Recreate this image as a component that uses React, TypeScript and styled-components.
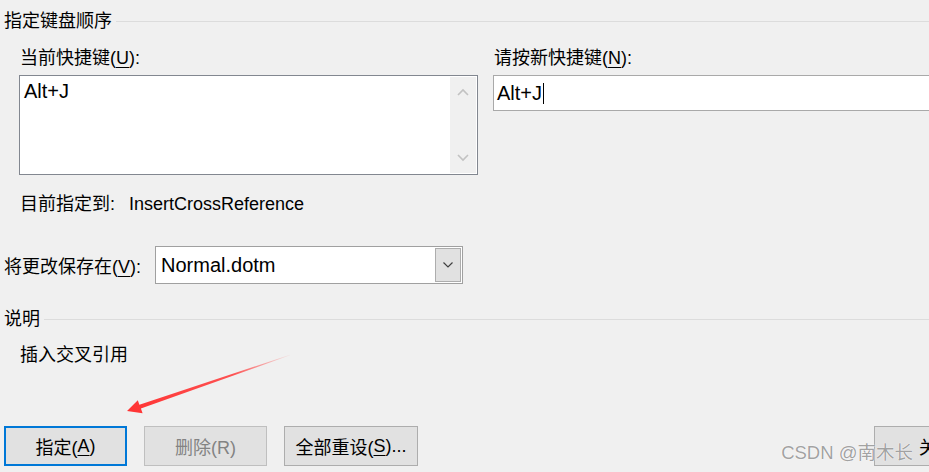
import React from "react";
import styled, { createGlobalStyle } from "styled-components";

const GlobalStyle = createGlobalStyle`
  html, body {
    margin: 0;
    padding: 0;
    background: #f0f0f0;
    overflow: hidden;
  }
  * {
    box-sizing: border-box;
  }
`;

const Dialog = styled.div`
  position: relative;
  width: 929px;
  height: 472px;
  overflow: hidden;
  background: #f0f0f0;
  padding-left: 4px;
  display: flex;
  flex-direction: column;
  color: #000;
  font-family: "Liberation Sans", "Noto Sans CJK SC", sans-serif;
  font-size: 18px;
`;

const GroupHeader = styled.div<{ $top: number }>`
  display: flex;
  align-items: center;
  height: 24px;
  margin-top: ${(p) => p.$top}px;
  gap: 4px;
`;

const GroupTitle = styled.span`
  line-height: 24px;
  white-space: nowrap;
`;

const GroupLine = styled.div`
  flex: 1;
  height: 1px;
  background: #dcdcdc;
`;

const KeyRow = styled.div`
  display: flex;
  gap: 15px;
  margin-top: 13px;
  padding-left: 15px;
`;

const Field = styled.div<{ $width: number }>`
  display: flex;
  flex-direction: column;
  gap: 5px;
  width: ${(p) => p.$width}px;
  flex-shrink: 0;
`;

const Label = styled.label`
  line-height: 24px;
  padding-left: 1px;
  white-space: nowrap;
`;

const Key = styled.u`
  text-decoration-thickness: 1px;
  text-underline-offset: 3px;
`;

const ListBox = styled.div`
  display: flex;
  height: 100px;
  background: #fff;
  border: 1px solid #828790;
`;

const ListText = styled.div`
  flex: 1;
  padding: 2px 4px;
  font-size: 20px;
  line-height: 26px;
`;

const ScrollTrack = styled.div`
  width: 26px;
  margin: 1px;
  background: #f0f0f0;
  display: flex;
  flex-direction: column;
  justify-content: space-between;
  align-items: center;
  padding: 11px 0;
`;

const TextInput = styled.div`
  display: flex;
  align-items: center;
  height: 36px;
  background: #fff;
  border: 1px solid #a9a9a9;
  padding-left: 3px;
  font-size: 20px;
`;

const Caret = styled.span`
  display: inline-block;
  width: 1px;
  height: 21px;
  margin-left: 1px;
  background: #000;
`;

const InfoRow = styled.div`
  display: flex;
  gap: 14px;
  margin-top: 17px;
  padding-left: 16px;
  line-height: 24px;
`;

const SaveRow = styled.div`
  display: flex;
  align-items: center;
  margin-top: 30px;
`;

const SaveLabel = styled.label`
  width: 151px;
  white-space: nowrap;
`;

const Select = styled.div`
  display: flex;
  width: 308px;
  height: 38px;
  background: #fff;
  border: 1px solid #a0a0a0;
  padding: 1px;
`;

const SelectValue = styled.div`
  flex: 1;
  display: flex;
  align-items: center;
  padding-left: 4px;
  font-size: 20px;
`;

const SelectButton = styled.div`
  width: 26px;
  background: #e1e1e1;
  border: 1px solid #adadad;
  display: flex;
  align-items: center;
  justify-content: center;
`;

const Description = styled.div`
  margin-top: 12px;
  padding-left: 16px;
  line-height: 24px;
`;

const ButtonRow = styled.div`
  display: flex;
  gap: 17px;
  margin-top: 59px;
`;

const Button = styled.div<{
  $width: number;
  $primary?: boolean;
  $disabled?: boolean;
  $push?: number;
}>`
  flex-shrink: 0;
  width: ${(p) => p.$width}px;
  height: 40px;
  margin-left: ${(p) => p.$push ?? 0}px;
  display: flex;
  align-items: center;
  justify-content: center;
  background: #e1e1e1;
  border: ${(p) =>
    p.$primary ? "2px solid #0078d7" : `1px solid ${p.$disabled ? "#bfbfbf" : "#adadad"}`};
  color: ${(p) => (p.$disabled ? "#838383" : "#000")};
  white-space: nowrap;
`;

const Watermark = styled.div`
  position: absolute;
  right: 16px;
  bottom: 8px;
  font-family: "Liberation Sans", "Noto Sans CJK SC", sans-serif;
  font-size: 18.5px;
  color: rgba(120, 120, 120, 0.7);
  text-shadow: 0 0 1px #fff, 0 0 1px #fff;
  white-space: nowrap;
`;

const Overlay = styled.svg`
  position: absolute;
  left: 0;
  top: 0;
  pointer-events: none;
`;

const Chevron = ({ up, color }: { up?: boolean; color: string }) => (
  <svg width="12" height="8" viewBox="0 0 12 8">
    <path
      d={up ? "M1 7 L6 2 L11 7" : "M1 1 L6 6 L11 1"}
      fill="none"
      stroke={color}
      strokeWidth="1.6"
    />
  </svg>
);

export default function App() {
  return (
    <>
      <GlobalStyle />
      <Dialog>
        <GroupHeader $top={9}>
          <GroupTitle>指定键盘顺序</GroupTitle>
          <GroupLine />
        </GroupHeader>

        <KeyRow>
          <Field $width={459}>
            <Label>
              当前快捷键(<Key>U</Key>):
            </Label>
            <ListBox>
              <ListText>Alt+J</ListText>
              <ScrollTrack>
                <Chevron up color="#c2c2c2" />
                <Chevron color="#c2c2c2" />
              </ScrollTrack>
            </ListBox>
          </Field>
          <Field $width={460}>
            <Label>
              请按新快捷键(<Key>N</Key>):
            </Label>
            <TextInput>
              Alt+J
              <Caret />
            </TextInput>
          </Field>
        </KeyRow>

        <InfoRow>
          <span>目前指定到:</span>
          <span>InsertCrossReference</span>
        </InfoRow>

        <SaveRow>
          <SaveLabel>
            将更改保存在(<Key>V</Key>):
          </SaveLabel>
          <Select>
            <SelectValue>Normal.dotm</SelectValue>
            <SelectButton>
              <svg width="10" height="6" viewBox="0 0 10 6">
                <path d="M0.5 0.5 L5 5 L9.5 0.5" fill="none" stroke="#404040" strokeWidth="1.2" />
              </svg>
            </SelectButton>
          </Select>
        </SaveRow>

        <GroupHeader $top={23}>
          <GroupTitle>说明</GroupTitle>
          <GroupLine />
        </GroupHeader>

        <Description>插入交叉引用</Description>

        <ButtonRow>
          <Button $width={123} $primary>
            指定(<Key>A</Key>)
          </Button>
          <Button $width={123} $disabled>
            删除(R)
          </Button>
          <Button $width={134}>
            全部重设(<Key>S</Key>)...
          </Button>
          <Button $width={126} $push={439}>
            关闭
          </Button>
        </ButtonRow>

        <Overlay width="929" height="472" viewBox="0 0 929 472">
          <defs>
            <linearGradient id="arrowFade" x1="290" y1="355" x2="127" y2="411" gradientUnits="userSpaceOnUse">
              <stop offset="0" stopColor="#ff4040" stopOpacity="0.05" />
              <stop offset="0.35" stopColor="#ff4040" stopOpacity="0.9" />
              <stop offset="1" stopColor="#ff3333" />
            </linearGradient>
          </defs>
          <polygon
            points="290.1,355.3 140.9,408.6 142.6,413.2 127,411 137.8,400.2 139.4,404.8 289.9,354.7"
            fill="url(#arrowFade)"
          />
        </Overlay>

        <Watermark>CSDN @南木长</Watermark>
      </Dialog>
    </>
  );
}
